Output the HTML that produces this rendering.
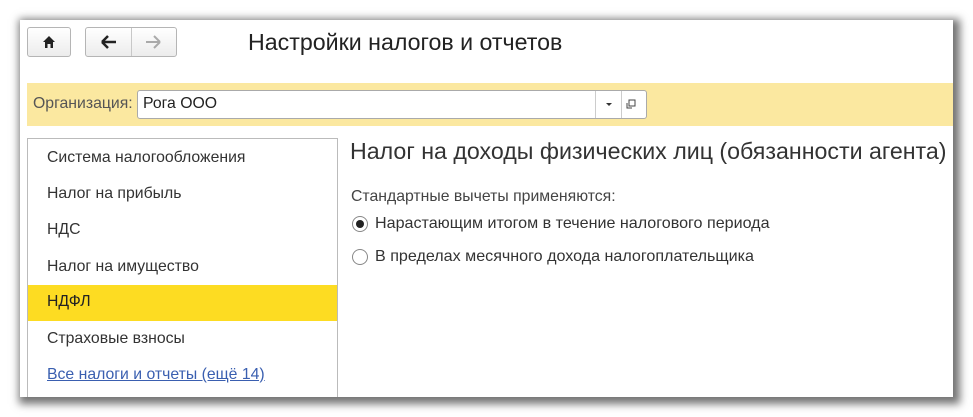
<!DOCTYPE html><html><head><meta charset="utf-8"><style>
body{margin:0;width:973px;height:417px;background:#fff;position:relative;overflow:hidden;font-family:"Liberation Sans",Arial,sans-serif;}
.win{position:absolute;left:20px;top:20px;width:933px;height:377px;background:#fff;box-shadow:3px 3px 8px 4px rgba(0,0,0,.55);overflow:hidden;}
.btn{position:absolute;top:7px;height:28px;border:1px solid #b5b5b5;border-radius:3px;background:linear-gradient(#fff,#ececec);}
.bar{position:absolute;left:7px;top:63px;width:926px;height:43px;background:#fbe8a0;}
.inp{position:absolute;left:110px;top:7px;width:508px;height:27px;border:1px solid #aaa;border-radius:3px;background:#fff;}
.left{position:absolute;left:7px;top:118px;width:309px;height:270px;border:1px solid #bbb;background:#fff;}
.it{position:absolute;left:19px;font-size:15.8px;color:#333;}
.t{position:absolute;font-size:15.8px;color:#333;white-space:nowrap;}
.r{position:absolute;width:14px;height:14px;border:1px solid #888;border-radius:50%;background:#fff;}
</style></head><body>
<div class="win">
<div class="btn" style="left:7px;width:42px"><svg width="42" height="28" viewBox="0 0 42 28"><path d="M15 14 L21 8 L27 14 H25 V20 H22.5 V16 H19.5 V20 H17 V14Z" fill="#222"/></svg></div>
<div class="btn" style="left:65px;width:90px"><div style="position:absolute;left:45px;top:0;width:1px;height:28px;background:#c8c8c8"></div>
<svg width="90" height="28" viewBox="0 0 90 28"><path d="M16 14 H30 M16 14 L22 8 M16 14 L22 20" stroke="#222" stroke-width="2.5" fill="none"/><path d="M74 14 H60 M74 14 L68 8 M74 14 L68 20" stroke="#aaa" stroke-width="2" fill="none"/></svg></div>
<div style="position:absolute;left:228px;top:9px;font-size:23.2px;color:#222;white-space:nowrap">Настройки налогов и отчетов</div>
<div class="bar"><div class="t" style="left:6px;top:12px;color:#555">Организация:</div>
<div class="inp"><div class="t" style="left:5px;top:4px;color:#222">Рога ООО</div>
<div style="position:absolute;left:457px;top:0;width:1px;height:27px;background:#ccc"></div>
<div style="position:absolute;left:483px;top:0;width:1px;height:27px;background:#ccc"></div>
<svg style="position:absolute;left:458px;top:0" width="50" height="27"><path d="M10 12 H16 L13 15Z" fill="#333"/><rect x="33" y="9" width="6" height="6" fill="none" stroke="#444"/><path d="M31 12 V17 H36" fill="none" stroke="#444"/></svg></div></div>
<div class="left">
<div class="it" style="top:10px">Система налогообложения</div>
<div class="it" style="top:46px">Налог на прибыль</div>
<div class="it" style="top:82px">НДС</div>
<div class="it" style="top:119px">Налог на имущество</div>
<div style="position:absolute;left:0;top:146px;width:309px;height:36px;background:#fddc22"></div>
<div class="it" style="top:154px;color:#222">НДФЛ</div>
<div class="it" style="top:191px">Страховые взносы</div>
<div class="it" style="top:227px;color:#3a5fb0;text-decoration:underline">Все налоги и отчеты (ещё 14)</div>
</div>
<div style="position:absolute;left:330px;top:118px;font-size:23.2px;color:#333;white-space:nowrap">Налог на доходы физических лиц (обязанности агента)</div>
<div class="t" style="left:331px;top:168px;color:#444">Стандартные вычеты применяются:</div>
<div class="r" style="left:332px;top:196px"><div style="position:absolute;left:3px;top:3px;width:8px;height:8px;border-radius:50%;background:#222"></div></div>
<div class="t" style="left:355px;top:194px;font-size:16.1px">Нарастающим итогом в течение налогового периода</div>
<div class="r" style="left:332px;top:229px"></div>
<div class="t" style="left:355px;top:227px;font-size:16.1px">В пределах месячного дохода налогоплательщика</div>
</div>
</body></html>
